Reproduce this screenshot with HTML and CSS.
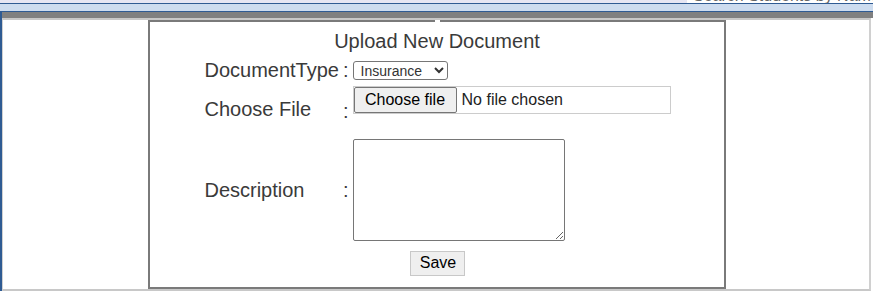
FILE: index.html
```html
<!DOCTYPE html>
<html>
<head>
<meta charset="utf-8">
<link rel="stylesheet" href="styles.css">
</head>
<body>
<div class="topstrip"><input class="search" type="text" placeholder="Search Students by Name"></div>
<div class="wrap">
  <div class="nav"></div>
  <div class="bar"></div>
  <div class="content">
    <div class="panel">
      <div class="title">Upload New Document</div>
      <div class="form">
        <span class="lbl row1">DocumentType</span>
        <span class="colon row1">:</span>
        <div class="field row1">
          <select class="sel">
            <option>Insurance</option>
            <option>Passport</option>
            <option>Visa</option>
          </select>
        </div>

        <span class="lbl row2">Choose File</span>
        <span class="colon row2 low">:</span>
        <div class="field row2 top">
          <label class="file">
            <input class="file-native" type="file">
            <span class="file-btn">Choose file</span>
            <span class="file-name">No file chosen</span>
          </label>
        </div>

        <span class="lbl row3">Description</span>
        <span class="colon row3">:</span>
        <div class="field row3">
          <textarea class="desc"></textarea>
        </div>

        <div class="actions"><button class="save" type="button">Save</button></div>
      </div>
    </div>
  </div>
</div>
</body>
</html>
```

FILE: styles.css
```css
html, body {
  margin: 0;
  padding: 0;
  background: #ffffff;
  font-family: "Liberation Sans", Arial, sans-serif;
  overflow: hidden;
}

.topstrip {
  height: 3px;
  background: #e6e6f3;
  overflow: hidden;
  display: flex;
  justify-content: flex-end;
}

.search {
  width: 180px;
  height: 20px;
  margin-top: -14px;
  border: none;
  padding: 0 0 0 6px;
  background: #ffffff;
  font-family: "Liberation Sans", Arial, sans-serif;
  font-size: 16px;
  color: #555;
}
.search::placeholder { color: #666; }

.wrap {
  border-left: 2px solid #2f5b93;
}

.nav {
  height: 7px;
  background: #cddcef;
  border-top: 1px solid #2f5b93;
  border-bottom: 1px solid #2f5b93;
  margin-left: -2px;
}

.bar {
  height: 6px;
  background: #808080;
}

.content {
  width: 866px;
  height: 269px;
  border-top: 2px solid #c8c8c8;
  border-right: 2px solid #d0d0d0;
  border-bottom: 2px solid #c8c8c8;
  border-left: 1px solid #d0d0d0;
  background: #ffffff;
}

.panel {
  position: relative;
  width: 574px;
  height: 257px;
  margin-left: 145px;
  border: 2px solid #7a7a7a;
  padding-top: 8px;
  color: #3a3a3a;
}

.panel::before {
  content: "";
  position: absolute;
  top: -2px;
  left: 285px;
  width: 5px;
  height: 2px;
  background: #ffffff;
}

.title {
  text-align: center;
  font-size: 20px;
  line-height: 23px;
  margin-bottom: 6px;
}

.form {
  display: grid;
  grid-template-columns: max-content max-content max-content;
  grid-template-rows: 23px 47px 106px 28px;
  row-gap: 4px;
  justify-content: center;
  font-size: 20px;
  line-height: 23px;
  padding-left: 2px;
}

.lbl, .colon { align-self: center; }
.lbl { margin-left: -1px; }
.colon { padding: 0 4px 0 4px; }
.colon.low { position: relative; top: 2px; }

.field { display: flex; align-items: center; }
.field.top { align-items: flex-start; }

.sel {
  width: 95px;
  height: 19px;
  font-family: "Liberation Sans", Arial, sans-serif;
  font-size: 14px;
  color: #333;
  border: 1px solid #767676;
  border-radius: 3px;
  background: #fff;
  padding: 0 0 0 3px;
}

.file {
  box-sizing: border-box;
  width: 318px;
  height: 28px;
  border: 1px solid #cccccc;
  display: flex;
  align-items: center;
  font-family: "Liberation Sans", Arial, sans-serif;
  font-size: 16px;
  line-height: 18px;
  background: #fff;
  cursor: pointer;
}
.file-native { display: none; }
.file-btn {
  box-sizing: border-box;
  height: 26px;
  width: 103px;
  display: flex;
  align-items: center;
  justify-content: center;
  color: #000;
  background: #efefef;
  border: 1px solid #767676;
  border-radius: 2px;
  margin-right: 5px;
}
.file-name { color: #222; }

.desc {
  box-sizing: border-box;
  width: 212px;
  height: 102px;
  margin: 0;
  border: 1px solid #767676;
  border-radius: 2px;
  font-family: "Liberation Mono", monospace;
  font-size: 13px;
}

.actions {
  grid-column: 1 / 4;
  justify-self: center;
  align-self: start;
  padding-top: 3px;
}

.save {
  box-sizing: border-box;
  width: 55px;
  height: 25px;
  padding: 0;
  font-family: "Liberation Sans", Arial, sans-serif;
  font-size: 16px;
  color: #000;
  background: #efefef;
  border: 1px solid #c8c8c8;
  border-radius: 0;
}
```
